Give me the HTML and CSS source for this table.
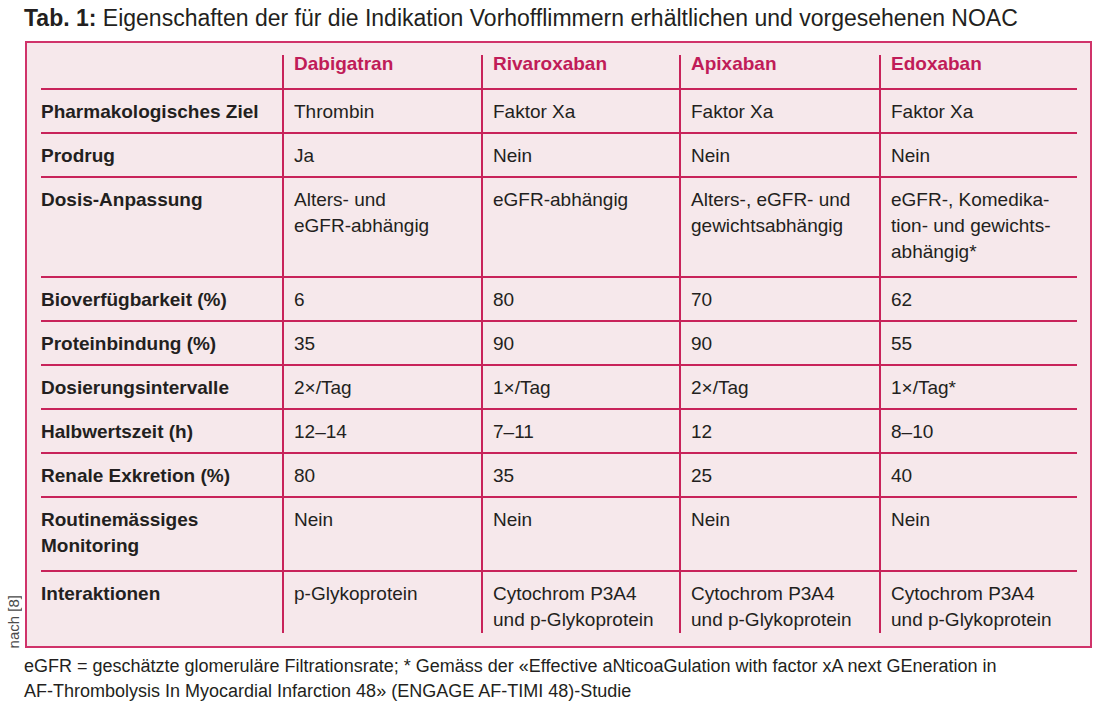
FILE: index.html
```html
<!DOCTYPE html>
<html lang="de">
<head>
<meta charset="utf-8">
<title>Tab. 1</title>
<link rel="stylesheet" href="styles.css">
</head>
<body>
<h1 class="title"><span class="title-num">Tab. 1:</span> Eigenschaften der für die Indikation Vorhofflimmern erhältlichen und vorgesehenen NOAC</h1>
<div class="wrap">
  <div class="side"><span class="source">nach [8]</span></div>
  <div class="box">
    <table class="grid">
      <colgroup>
        <col class="c-label"><col class="c-a"><col class="c-b"><col class="c-c"><col class="c-d">
      </colgroup>
      <thead>
        <tr class="head">
          <th class="lab"></th>
          <th>Dabigatran</th>
          <th>Rivaroxaban</th>
          <th>Apixaban</th>
          <th>Edoxaban</th>
        </tr>
      </thead>
      <tbody>
        <tr><th class="lab">Pharmakologisches Ziel</th><td>Thrombin</td><td>Faktor Xa</td><td>Faktor Xa</td><td>Faktor Xa</td></tr>
        <tr><th class="lab">Prodrug</th><td>Ja</td><td>Nein</td><td>Nein</td><td>Nein</td></tr>
        <tr class="tall"><th class="lab">Dosis-Anpassung</th><td>Alters- und<br>eGFR-abhängig</td><td>eGFR-abhängig</td><td>Alters-, eGFR- und<br>gewichtsabhängig</td><td>eGFR-, Komedika-<br>tion- und gewichts-<br>abhängig*</td></tr>
        <tr><th class="lab">Bioverfügbarkeit (%)</th><td>6</td><td>80</td><td>70</td><td>62</td></tr>
        <tr><th class="lab">Proteinbindung (%)</th><td>35</td><td>90</td><td>90</td><td>55</td></tr>
        <tr><th class="lab">Dosierungsintervalle</th><td>2×/Tag</td><td>1×/Tag</td><td>2×/Tag</td><td>1×/Tag*</td></tr>
        <tr><th class="lab">Halbwertszeit (h)</th><td>12–14</td><td>7–11</td><td>12</td><td>8–10</td></tr>
        <tr><th class="lab">Renale Exkretion (%)</th><td>80</td><td>35</td><td>25</td><td>40</td></tr>
        <tr class="tall"><th class="lab">Routinemässiges<br>Monitoring</th><td>Nein</td><td>Nein</td><td>Nein</td><td>Nein</td></tr>
        <tr class="last"><th class="lab">Interaktionen</th><td>p-Glykoprotein</td><td>Cytochrom P3A4<br>und p-Glykoprotein</td><td>Cytochrom P3A4<br>und p-Glykoprotein</td><td>Cytochrom P3A4<br>und p-Glykoprotein</td></tr>
      </tbody>
    </table>
  </div>
</div>
<p class="note">eGFR = geschätzte glomeruläre Filtrationsrate; * Gemäss der «Effective aNticoaGulation with factor xA next GEneration in<br>AF-Thrombolysis In Myocardial Infarction 48» (ENGAGE AF-TIMI 48)-Studie</p>
</body>
</html>
```

FILE: styles.css
```css
* { box-sizing: border-box; }

body {
  margin: 0;
  background: #ffffff;
  color: #231f20;
  font-family: "Liberation Sans", Arial, sans-serif;
}

.title {
  margin: 0;
  padding: 3px 0 0 24px;
  height: 41px;
  font-size: 23px;
  line-height: 30px;
  font-weight: normal;
  color: #231f20;
  white-space: nowrap;
}

.title-num { font-weight: bold; }

.wrap {
  display: flex;
  align-items: stretch;
}

.side {
  width: 25px;
  display: flex;
  align-items: flex-end;
  justify-content: center;
  padding-bottom: 0;
}

.source {
  writing-mode: vertical-rl;
  transform: rotate(180deg);
  font-size: 15px;
  line-height: 15px;
  color: #4a4a4a;
  margin-left: 2px;
}

.box {
  width: 1067px;
  background: #f6e8eb;
  border: 2px solid #d0336a;
  padding: 12px 13px 13px 14px;
}

.grid {
  width: 1036px;
  table-layout: fixed;
  border-collapse: separate;
  border-spacing: 0;
  font-size: 19px;
  line-height: 26px;
}

.c-label { width: 241px; }
.c-a { width: 199px; }
.c-b { width: 198px; }
.c-c { width: 200px; }
.c-d { width: 198px; }

.grid th,
.grid td {
  text-align: left;
  vertical-align: top;
  padding: 9px 0 7px 10px;
  border-left: 2px solid #c8235a;
}

.grid .lab {
  padding-left: 0;
  border-left: none;
  font-weight: bold;
  color: #231f20;
}

.grid td { font-weight: normal; }

.grid tbody th,
.grid tbody td {
  border-top: 2px solid #c8235a;
}

.grid .head th {
  color: #c01c58;
  font-weight: bold;
  line-height: 18px;
  padding-top: 0;
  padding-bottom: 15px;
}

.grid .tall th,
.grid .tall td {
  padding-bottom: 11px;
}

.grid .last th,
.grid .last td {
  padding-bottom: 0;
}

.note {
  margin: 6px 0 0 24px;
  font-size: 18px;
  line-height: 25px;
  color: #231f20;
  white-space: nowrap;
}
```
